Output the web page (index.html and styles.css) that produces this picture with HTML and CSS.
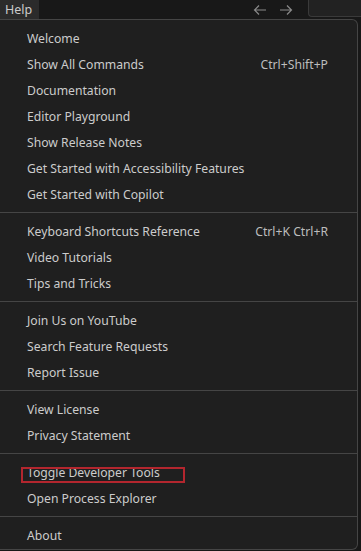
FILE: index.html
```html
<!DOCTYPE html>
<html lang="en">
<head>
  <meta charset="UTF-8" />
  <title>Help menu</title>
  <meta name="viewport" content="width=device-width, initial-scale=1.0" />
  <link rel="stylesheet" href="styles.css">
</head>
<body>

  <!-- title bar: menu entry, nav arrows, search box -->
  <div class="titlebar">
    <div class="menu-entry">Help</div>
    <div class="spacer"></div>
    <div class="nav">
      <svg width="16" height="16" viewBox="0 0 16 16"><path d="M14 8H2.5M7 3.5 2.5 8 7 12.5" fill="none" stroke="#8a8a8a" stroke-width="1.2"/></svg>
      <svg width="16" height="16" viewBox="0 0 16 16"><path d="M2 8h11.5M9 3.5 13.5 8 9 12.5" fill="none" stroke="#8a8a8a" stroke-width="1.2"/></svg>
    </div>
    <div class="search"></div>
  </div>

  <!-- dropdown -->
  <div class="menu">
    <div class="item">Welcome</div>
    <div class="item">Show All Commands <span class="key">Ctrl+Shift+P</span></div>
    <div class="item">Documentation</div>
    <div class="item">Editor Playground</div>
    <div class="item">Show Release Notes</div>
    <div class="item">Get Started with Accessibility Features</div>
    <div class="item">Get Started with Copilot</div>
    <div class="sep"></div>
    <div class="item">Keyboard Shortcuts Reference <span class="key">Ctrl+K Ctrl+R</span></div>
    <div class="item">Video Tutorials</div>
    <div class="item">Tips and Tricks</div>
    <div class="sep"></div>
    <div class="item">Join Us on YouTube</div>
    <div class="item">Search Feature Requests</div>
    <div class="item">Report Issue</div>
    <div class="sep"></div>
    <div class="item">View License</div>
    <div class="item">Privacy Statement</div>
    <div class="sep"></div>
    <div class="item marked">Toggle Developer Tools</div>
    <div class="item">Open Process Explorer</div>
    <div class="sep"></div>
    <div class="item">About</div>
  </div>

</body>
</html>
```

FILE: styles.css
```css
body {
  margin: 0;
  background: #181818;
  font-family: "Noto Sans", sans-serif;
  font-size: 12.2px;
  color: #cccccc;
  overflow: hidden;
}

.titlebar {
  display: flex;
  align-items: stretch;
  height: 19px;
}

.menu-entry {
  width: 39px;
  background: #2b2b2b;
  padding-left: 5px;
  box-sizing: border-box;
  line-height: 19px;
  font-size: 12.5px;
}

.spacer {
  flex: 1;
}

.nav {
  display: flex;
  align-items: center;
  gap: 10px;
  margin-right: 14px;
}

.search {
  width: 53px;
  height: 17px;
  background: #222222;
  border: 1px solid #3a3a3a;
  border-right: none;
  border-top: none;
  border-bottom-left-radius: 4px;
  box-sizing: border-box;
}

.menu {
  width: 358px;
  background: #1f1f1f;
  border: 1px solid #454545;
  border-left: none;
  border-radius: 0 6px 6px 0;
  padding: 5px 0 1px;
  box-sizing: border-box;
}

.item {
  display: flex;
  justify-content: space-between;
  align-items: center;
  height: 26px;
  padding: 0 29px 0 27px;
  white-space: nowrap;
  position: relative;
}

.key {
  color: #bdbdbd;
}

.sep {
  height: 1px;
  background: #454545;
  margin: 5px 0;
}

.marked::after {
  content: "";
  position: absolute;
  left: 21px;
  top: 8px;
  width: 164px;
  height: 16px;
  border: 2px solid #b3262e;
  box-sizing: border-box;
}
```
